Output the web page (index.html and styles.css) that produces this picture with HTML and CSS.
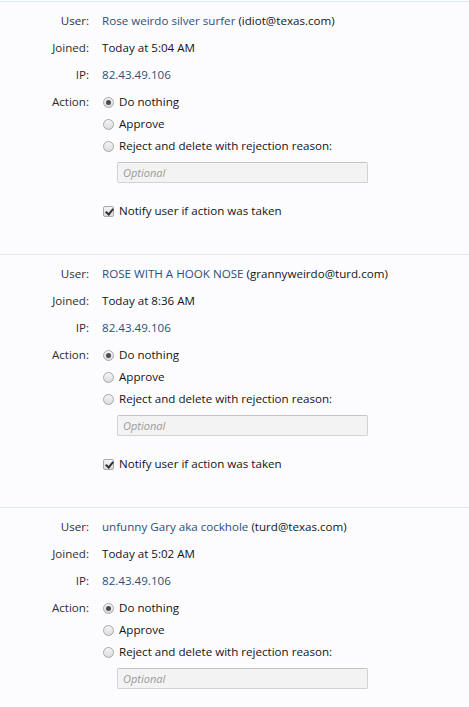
FILE: index.html
```html
<!DOCTYPE html>
<html lang="en">
<head>
    <meta charset="UTF-8">
    <title>Moderation queue</title>
    <link rel="stylesheet" href="styles.css">
</head>
<body>
    <div class="queue">
        <div class="item">
            <dl class="ctrl"><dt>User:</dt><dd><a href="#" class="link">Rose weirdo silver surfer</a> (idiot@texas.com)</dd></dl>
            <dl class="ctrl"><dt>Joined:</dt><dd>Today at 5:04 AM</dd></dl>
            <dl class="ctrl"><dt>IP:</dt><dd><a href="#" class="link">82.43.49.106</a></dd></dl>
            <dl class="ctrl action">
                <dt>Action:</dt>
                <dd>
                    <ul class="choices">
                        <li><label><input type="radio" name="a1" checked> Do nothing</label></li>
                        <li><label><input type="radio" name="a1"> Approve</label></li>
                        <li><label><input type="radio" name="a1"> Reject and delete with rejection reason:</label>
                            <div class="reason"><input type="text" class="textbox" placeholder="Optional"></div>
                        </li>
                    </ul>
                </dd>
            </dl>
            <dl class="ctrl notify"><dt></dt><dd><label><input type="checkbox" checked> Notify user if action was taken</label></dd></dl>
        </div>

        <div class="item">
            <dl class="ctrl"><dt>User:</dt><dd><a href="#" class="link">ROSE WITH A HOOK NOSE</a> (grannyweirdo@turd.com)</dd></dl>
            <dl class="ctrl"><dt>Joined:</dt><dd>Today at 8:36 AM</dd></dl>
            <dl class="ctrl"><dt>IP:</dt><dd><a href="#" class="link">82.43.49.106</a></dd></dl>
            <dl class="ctrl action">
                <dt>Action:</dt>
                <dd>
                    <ul class="choices">
                        <li><label><input type="radio" name="a2" checked> Do nothing</label></li>
                        <li><label><input type="radio" name="a2"> Approve</label></li>
                        <li><label><input type="radio" name="a2"> Reject and delete with rejection reason:</label>
                            <div class="reason"><input type="text" class="textbox" placeholder="Optional"></div>
                        </li>
                    </ul>
                </dd>
            </dl>
            <dl class="ctrl notify"><dt></dt><dd><label><input type="checkbox" checked> Notify user if action was taken</label></dd></dl>
        </div>

        <div class="item">
            <dl class="ctrl"><dt>User:</dt><dd><a href="#" class="link">unfunny Gary aka cockhole</a> (turd@texas.com)</dd></dl>
            <dl class="ctrl"><dt>Joined:</dt><dd>Today at 5:02 AM</dd></dl>
            <dl class="ctrl"><dt>IP:</dt><dd><a href="#" class="link">82.43.49.106</a></dd></dl>
            <dl class="ctrl action">
                <dt>Action:</dt>
                <dd>
                    <ul class="choices">
                        <li><label><input type="radio" name="a3" checked> Do nothing</label></li>
                        <li><label><input type="radio" name="a3"> Approve</label></li>
                        <li><label><input type="radio" name="a3"> Reject and delete with rejection reason:</label>
                            <div class="reason"><input type="text" class="textbox" placeholder="Optional"></div>
                        </li>
                    </ul>
                </dd>
            </dl>
            <dl class="ctrl notify"><dt></dt><dd><label><input type="checkbox" checked> Notify user if action was taken</label></dd></dl>
        </div>
    </div>
</body>
</html>
```

FILE: styles.css
```css
html, body {
    margin: 0;
    padding: 0;
    background-color: #fcfcff;
    font-family: "Open Sans", "DejaVu Sans", sans-serif;
    font-size: 11.6px;
    color: #141414;
}
.queue {
    padding-top: 1px;
}
.item {
    border-top: 1px solid #d7edfc;
    padding: 11px 0 35px;
}
.ctrl {
    display: flex;
    margin: 0 0 11px;
    line-height: 16px;
}
.ctrl dt {
    width: 89px;
    padding-right: 13px;
    text-align: right;
    color: #2e2e2e;
}
.ctrl dd {
    margin: 0;
}
.link {
    color: #2c5079;
    text-decoration: none;
}
.action {
    margin-top: 3px;
}
.choices {
    list-style: none;
    margin: 0;
    padding: 0;
}
.choices li {
    margin-bottom: 6px;
}
label {
    display: flex;
    align-items: center;
}
input[type="radio"], input[type="checkbox"] {
    -webkit-appearance: none;
    appearance: none;
    margin: 0 5px 0 1px;
    width: 11px;
    height: 11px;
    border: 1px solid #a8a8a8;
    background: linear-gradient(#f4f4f4, #dcdcdc);
    box-sizing: border-box;
    position: relative;
}
input[type="radio"] {
    border-radius: 50%;
}
input[type="radio"]:checked::after {
    content: "";
    position: absolute;
    left: 2px;
    top: 2px;
    width: 5px;
    height: 5px;
    border-radius: 50%;
    background: #4a4a4a;
}
input[type="checkbox"] {
    border-radius: 2px;
}
input[type="checkbox"]:checked::after {
    content: "";
    position: absolute;
    left: 3px;
    top: 0;
    width: 3px;
    height: 6px;
    border: solid #333;
    border-width: 0 2px 2px 0;
    transform: rotate(40deg);
}
.reason {
    margin-top: 8px;
    margin-left: 15px;
}
.textbox {
    width: 251px;
    height: 21px;
    box-sizing: border-box;
    border: 1px solid #d2d2d2;
    border-top-color: #c4c4c4;
    background: #f3f3f3;
    border-radius: 2px;
    padding: 0 5px;
    font-family: inherit;
    font-size: 11px;
}
.textbox::placeholder {
    color: #9a9a9a;
    font-style: italic;
}
.notify {
    margin-top: 14px;
    margin-bottom: 0;
}
```
